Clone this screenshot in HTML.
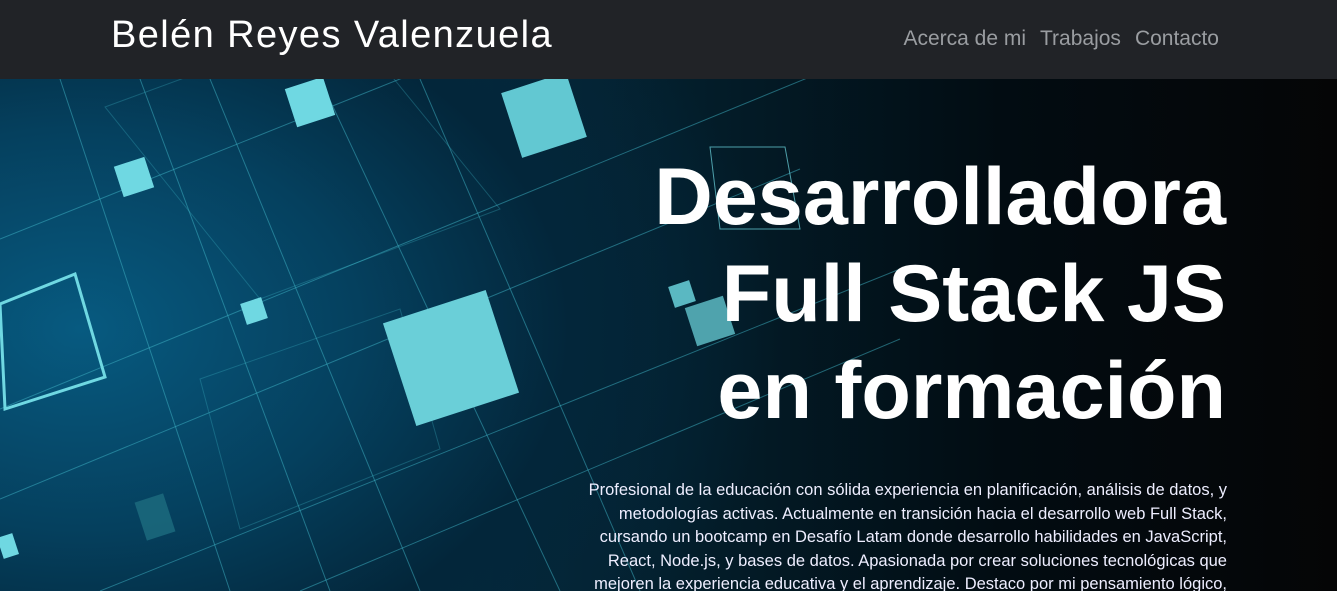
<!DOCTYPE html>
<html><head><meta charset="utf-8"><style>
*{margin:0;padding:0;box-sizing:border-box}
body{width:1337px;height:591px;overflow:hidden;background:#000;font-family:"Liberation Sans",sans-serif}
nav{position:absolute;left:0;top:0;width:1337px;height:79px;background:#212327}
.brand{position:absolute;left:111px;top:14px;font-size:38px;color:#fff;letter-spacing:1.4px}
.links{position:absolute;right:118px;top:27px;font-size:21px;color:#9a9da1}
.links span{margin-left:14px}
.hero{position:absolute;left:0;top:79px;width:1337px;height:512px;overflow:hidden;
background:radial-gradient(ellipse 700px 500px at 80px 250px,#075a80 0%,#05405e 40%,#03263a 70%,rgba(2,20,30,0) 100%),linear-gradient(90deg,#05344c 0%,#042a3c 35%,#031b27 55%,#020c12 75%,#050506 100%)}
.sq{position:absolute;background:#6fd8e2}
h1{position:absolute;right:111px;top:70px;text-align:right;color:#fff;font-size:81px;font-weight:bold;line-height:97px;letter-spacing:0}
p{position:absolute;right:110px;top:400px;width:650px;text-align:right;color:#eef;font-size:16.5px;line-height:23.5px}
</style></head><body>
<nav><div class="brand">Belén Reyes Valenzuela</div><div class="links"><span>Acerca de mi</span><span>Trabajos</span><span>Contacto</span></div></nav>
<div class="hero">
<svg width="1337" height="512" style="position:absolute;left:0;top:0" stroke="#3fb6c8" stroke-opacity="0.5" fill="none" stroke-width="1">
<line x1="0" y1="160" x2="700" y2="-120"/><line x1="0" y1="330" x2="1000" y2="-80"/>
<line x1="0" y1="420" x2="800" y2="90"/><line x1="100" y1="512" x2="900" y2="190"/>
<line x1="300" y1="512" x2="900" y2="260"/><line x1="140" y1="0" x2="330" y2="512"/>
<line x1="210" y1="0" x2="420" y2="512"/><line x1="320" y1="0" x2="560" y2="512"/>
<line x1="420" y1="0" x2="640" y2="512"/><line x1="60" y1="0" x2="230" y2="512"/>
<polygon points="105,28 345,-60 500,130 260,220" stroke-opacity="0.3"/>
<polygon points="200,300 400,230 440,370 240,450" stroke-opacity="0.3"/>
<polygon points="710,68 785,68 800,150 720,150" stroke="#6fd8e2" stroke-opacity="0.7"/>
<polygon points="0,225 75,195 105,298 5,330" stroke="#6fd8e2" stroke-opacity="1" stroke-width="3"/>
</svg>
<div class="sq" style="left:290px;top:3px;width:40px;height:40px;transform:rotate(-18deg)"></div>
<div class="sq" style="left:510px;top:2px;width:68px;height:68px;transform:rotate(-18deg);background:#62c8d2"></div>
<div class="sq" style="left:118px;top:82px;width:32px;height:32px;transform:rotate(-18deg)"></div>
<div class="sq" style="left:243px;top:221px;width:22px;height:22px;transform:rotate(-18deg)"></div>
<div class="sq" style="left:397px;top:225px;width:108px;height:108px;transform:rotate(-18deg);background:#6acfd8"></div>
<div class="sq" style="left:671px;top:204px;width:22px;height:22px;transform:rotate(-18deg);background:#5ab8c2"></div>
<div class="sq" style="left:690px;top:222px;width:40px;height:40px;transform:rotate(-18deg);background:#4fa3ad"></div>
<div class="sq" style="left:0px;top:456px;width:16px;height:22px;transform:rotate(-18deg)"></div>
<div class="sq" style="left:140px;top:418px;width:30px;height:40px;transform:rotate(-18deg);background:#1d6d80;opacity:.8"></div>
<h1>Desarrolladora<br>Full Stack JS<br>en formación</h1>
<p>Profesional de la educación con sólida experiencia en planificación, análisis de datos, y metodologías activas. Actualmente en transición hacia el desarrollo web Full Stack, cursando un bootcamp en Desafío Latam donde desarrollo habilidades en JavaScript, React, Node.js, y bases de datos. Apasionada por crear soluciones tecnológicas que mejoren la experiencia educativa y el aprendizaje. Destaco por mi pensamiento lógico,</p>
</div>
</body></html>
